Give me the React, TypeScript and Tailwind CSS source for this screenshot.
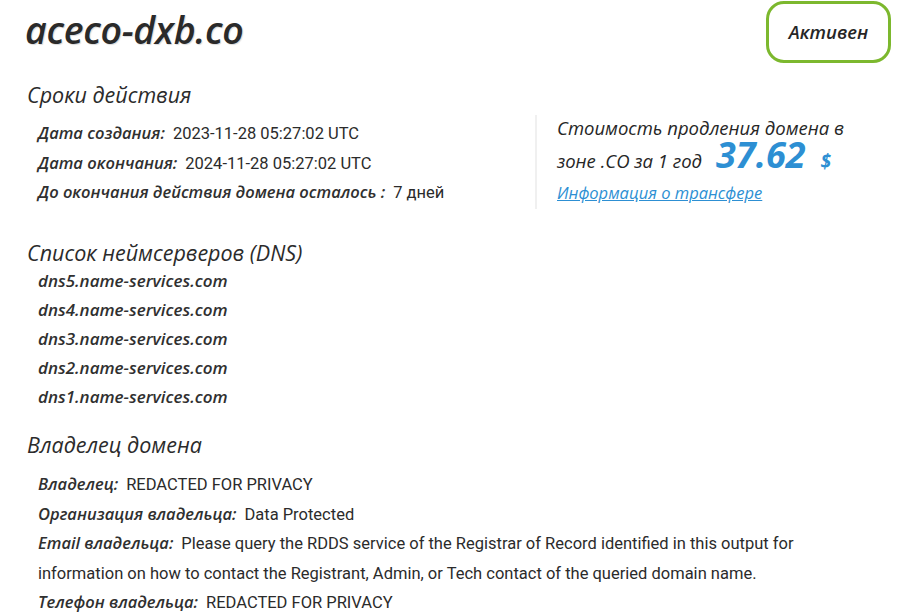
const dates = [
  { label: "Дата создания:", value: "2023-11-28 05:27:02 UTC" },
  { label: "Дата окончания:", value: "2024-11-28 05:27:02 UTC" },
  { label: "До окончания действия домена осталось :", value: "7 дней" },
];

const nameservers = [
  "dns5.name-services.com",
  "dns4.name-services.com",
  "dns3.name-services.com",
  "dns2.name-services.com",
  "dns1.name-services.com",
];

const owner = [
  { label: "Владелец:", value: "REDACTED FOR PRIVACY" },
  { label: "Организация владельца:", value: "Data Protected" },
  {
    label: "Email владельца:",
    value:
      "Please query the RDDS service of the Registrar of Record identified in this output for information on how to contact the Registrant, Admin, or Tech contact of the queried domain name.",
  },
  { label: "Телефон владельца:", value: "REDACTED FOR PRIVACY" },
];

function Row({ label, value }: { label: string; value: string }) {
  return (
    <div className="font-['Roboto',sans-serif] text-[16.5px] leading-[29.5px]">
      <span className="mr-[8px] font-['Open_Sans',sans-serif] italic font-semibold leading-[20px] text-[#303030]">
        {label}
      </span>
      <span className="leading-[20px] text-[#2b2b2b]">{value}</span>
    </div>
  );
}

function SectionTitle({ children }: { children: React.ReactNode }) {
  return (
    <h2 className="pl-[27px] font-['Open_Sans',sans-serif] italic text-[21.5px] leading-[28px] text-[#2b2b2b]">
      {children}
    </h2>
  );
}

export default function App() {
  return (
    <div className="w-[918px] h-[614px] overflow-hidden bg-white text-[#2b2b2b]">
      {/* Header */}
      <div className="flex items-start justify-between pl-[25px] pr-[27px] pt-px">
        <h1 className="mt-[5px] font-['Open_Sans',sans-serif] italic font-semibold text-[37.5px] leading-[48px] tracking-[-0.3px] text-[#2a2a2a] [text-shadow:1px_1px_1px_rgba(0,0,0,0.15)]">
          aceco-dxb.co
        </h1>
        <span className="flex h-[62px] w-[125px] items-center justify-center rounded-[18px] border-[3px] border-[#7cb82e] font-['Open_Sans',sans-serif] italic font-semibold text-[18.5px] text-[#262626]">
          Активен
        </span>
      </div>

      {/* Validity */}
      <div className="mt-[18px]">
        <SectionTitle>Сроки действия</SectionTitle>
        <div className="mt-[10px] flex">
          <div className="w-[535px] pl-[38px]">
            {dates.map((d) => (
              <Row key={d.label} {...d} />
            ))}
          </div>
          <div className="-mt-[4px] border-l-2 border-[#f0f0f0] pl-[20px] font-['Open_Sans',sans-serif] italic text-[18.5px] text-[#262626]">
            <div className="leading-[26px]">Стоимость продления домена в</div>
            <div className="flex h-[36px] items-baseline leading-[36px]">
              <span>зоне .CO за 1 год</span>
              <span className="ml-[14px] text-[36px] leading-[28px] font-bold text-[#2d8fd3]">37.62</span>
              <span className="ml-[15px] text-[19px] font-bold text-[#2d8fd3]">$</span>
            </div>
            <a href="#" className="block text-[16.5px] leading-[32px] text-[#2d8fd3] underline">
              Информация о трансфере
            </a>
          </div>
        </div>
      </div>

      {/* DNS */}
      <div className="mt-[30px]">
        <SectionTitle>Список неймсерверов (DNS)</SectionTitle>
        <div className="-mt-[1px] pl-[38px]">
          {nameservers.map((ns) => (
            <div
              key={ns}
              className="font-['Open_Sans',sans-serif] italic font-semibold text-[17px] leading-[29px] text-[#303030]"
            >
              {ns}
            </div>
          ))}
        </div>
      </div>

      {/* Owner */}
      <div className="mt-[20px]">
        <SectionTitle>Владелец домена</SectionTitle>
        <div className="mt-[11px] w-[850px] pl-[38px]">
          {owner.map((o) => (
            <Row key={o.label} {...o} />
          ))}
        </div>
      </div>
    </div>
  );
}
